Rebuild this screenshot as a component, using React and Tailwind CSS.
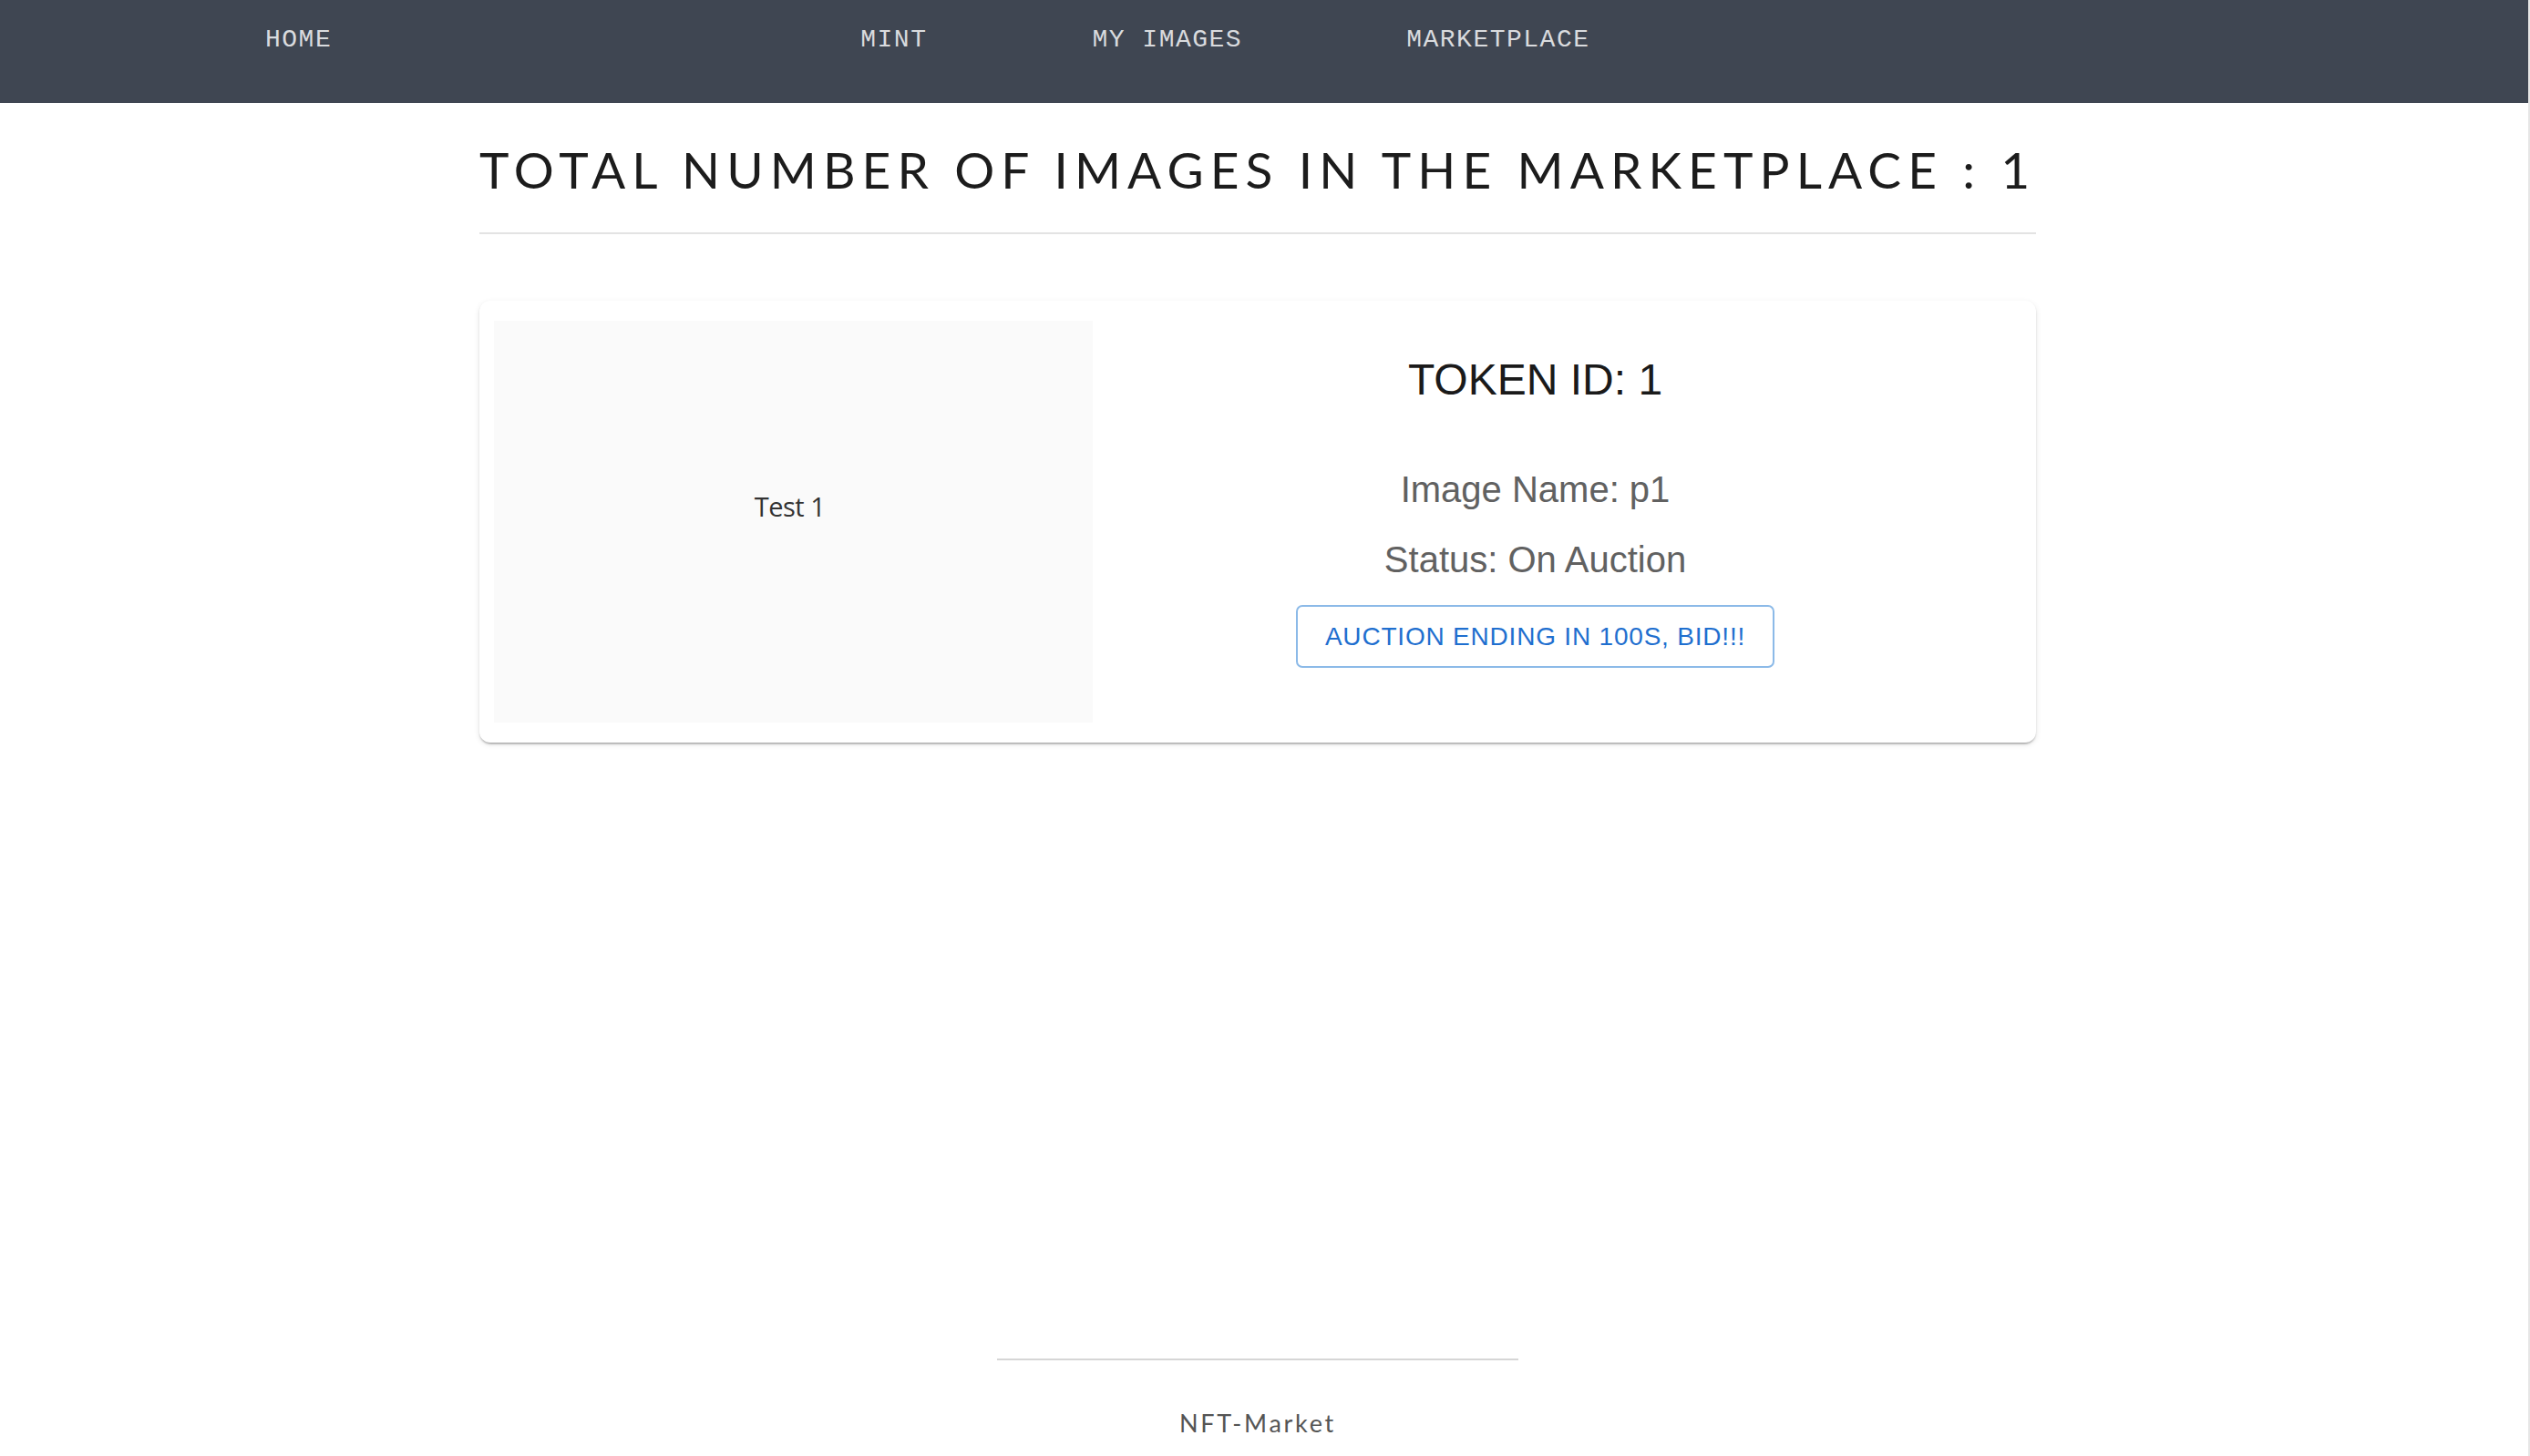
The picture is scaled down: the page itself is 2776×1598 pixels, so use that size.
import React from "react";

export default function App() {
  return (
    <div className="flex min-h-screen w-full bg-white">
      <div className="flex min-h-screen flex-1 flex-col">
        <nav className="h-[113px] w-full bg-[#3f4652]">
          <div
            className="flex pl-[291px] pt-[30px] text-[28px] leading-none tracking-[1.5px] text-[#d9dbde]"
            style={{ fontFamily: '"Liberation Mono", "Courier New", monospace' }}
          >
            <span>HOME</span>
            <span className="ml-[580px]">MINT</span>
            <span className="ml-[181px]">MY IMAGES</span>
            <span className="ml-[180px]">MARKETPLACE</span>
          </div>
        </nav>

        <main className="pr-[14px]">
          <div className="mx-auto w-[1708px]">
            <h1
              className="mt-[40px] whitespace-nowrap text-[55px] leading-[1.2] tracking-[7.1px] text-[#1c1c1c] font-normal"
              style={{ fontFamily: 'Lato, "Open Sans", sans-serif' }}
            >
              TOTAL NUMBER OF IMAGES IN THE MARKETPLACE : 1
            </h1>
            <div className="mt-[36px] h-[2px] w-full bg-[#e3e3e3]" />

            <div className="mt-[73px] flex items-start rounded-[12px] bg-white py-[22px] pl-[16px] shadow-[0_3px_2px_-2px_rgba(0,0,0,0.25),0_2px_2px_0_rgba(0,0,0,0.12),0_2px_6px_0_rgba(0,0,0,0.10)]">
              <div className="flex h-[441px] w-[657px] items-center justify-center bg-[#fafafa] pb-[34px] pr-[8px]">
                <span
                  className="text-[29px] tracking-[-0.5px] text-[#333333]"
                  style={{ fontFamily: '"Open Sans", "Noto Sans", sans-serif' }}
                >
                  Test 1
                </span>
              </div>
              <div
                className="flex w-[971px] flex-col items-center pt-[41px]"
                style={{ fontFamily: '"Liberation Sans", Arial, sans-serif' }}
              >
                <div className="text-[48px] leading-none text-[#1a1a1a]">TOKEN ID: 1</div>
                <div className="mt-[76px] text-[40px] leading-none text-[#616161]">Image Name: p1</div>
                <div className="mt-[37px] text-[40px] leading-none text-[#616161]">Status: On Auction</div>
                <button className="mt-[30px] flex h-[69px] w-[525px] items-center justify-center rounded-[7px] border-[2px] border-[rgba(25,118,210,0.5)] bg-white text-[28px] leading-none tracking-[0.8px] text-[#1f6fcf]">
                  AUCTION ENDING IN 100S, BID!!!
                </button>
              </div>
            </div>
          </div>
        </main>

        <footer className="mt-auto pb-[23px] pr-[14px]">
          <div className="mx-auto h-[2px] w-[572px] bg-[#d6d6d6]" />
          <div
            className="mt-[55px] text-center text-[27px] leading-none tracking-[2.7px] text-[#555555]"
            style={{ fontFamily: 'Lato, "Open Sans", sans-serif' }}
          >
            NFT-Market
          </div>
        </footer>
      </div>
      <div className="w-[2px] bg-[#e6e6e6]" />
    </div>
  );
}
